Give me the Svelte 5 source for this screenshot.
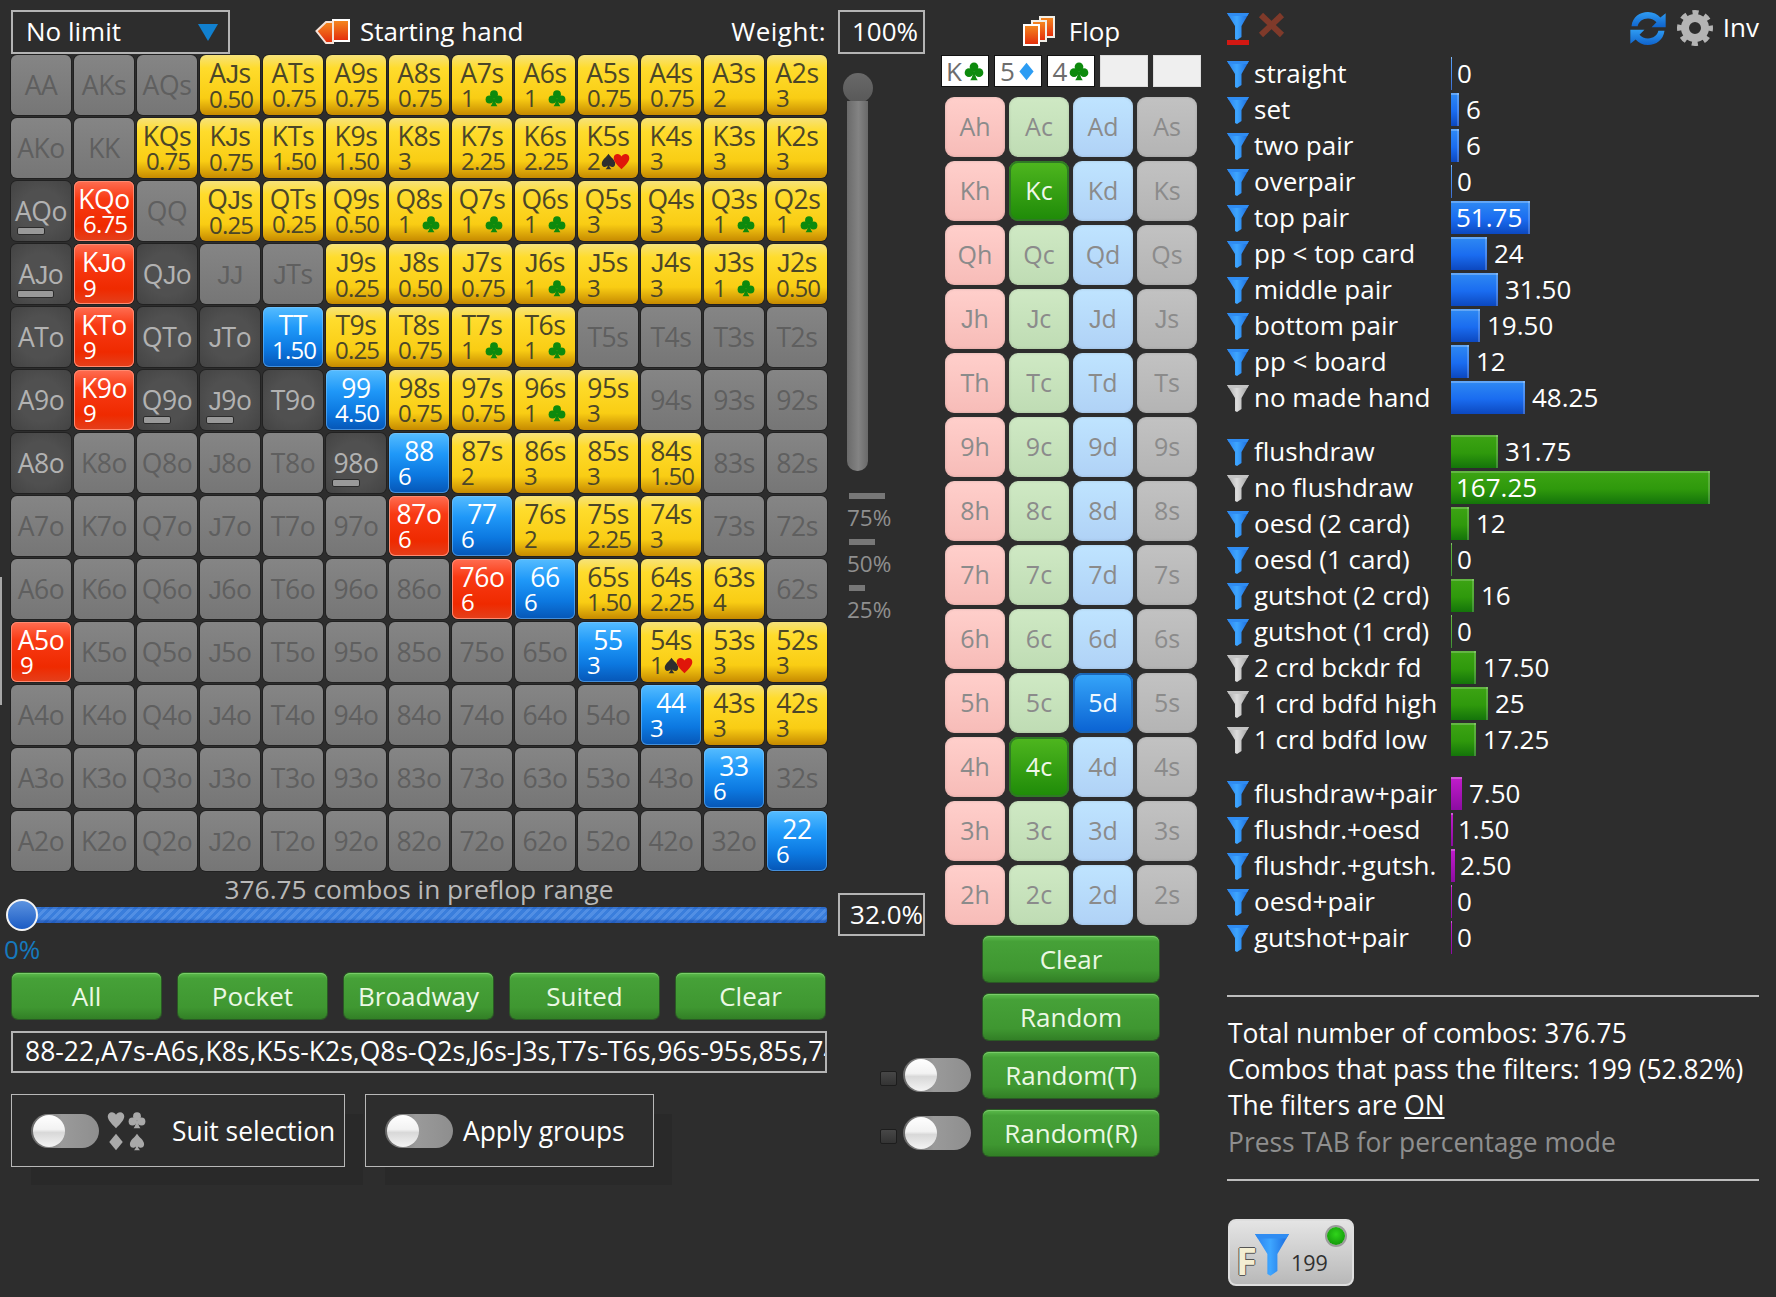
<script>
  const RANKS = 'AKQJT98765432'.split('');

  const VALUES = {
    AJs: '0.50', ATs: '0.75', A9s: '0.75', A8s: '0.75', A7s: '1', A6s: '1', A5s: '0.75', A4s: '0.75', A3s: '2', A2s: '3',
    KQs: '0.75', KJs: '0.75', KTs: '1.50', K9s: '1.50', K8s: '3', K7s: '2.25', K6s: '2.25', K5s: '2', K4s: '3', K3s: '3', K2s: '3',
    KQo: '6.75', QJs: '0.25', QTs: '0.25', Q9s: '0.50', Q8s: '1', Q7s: '1', Q6s: '1', Q5s: '3', Q4s: '3', Q3s: '1', Q2s: '1',
    KJo: '9', J9s: '0.25', J8s: '0.50', J7s: '0.75', J6s: '1', J5s: '3', J4s: '3', J3s: '1', J2s: '0.50',
    KTo: '9', TT: '1.50', T9s: '0.25', T8s: '0.75', T7s: '1', T6s: '1',
    K9o: '9', 99: '4.50', '98s': '0.75', '97s': '0.75', '96s': '1', '95s': '3',
    88: '6', '87s': '2', '86s': '3', '85s': '3', '84s': '1.50',
    '87o': '6', 77: '6', '76s': '2', '75s': '2.25', '74s': '3',
    '76o': '6', 66: '6', '65s': '1.50', '64s': '2.25', '63s': '4',
    A5o: '9', 55: '3', '54s': '1', '53s': '3', '52s': '3',
    44: '3', '43s': '3', '42s': '3',
    33: '6', 22: '6'
  };
  const CLUB = ['A7s', 'A6s', 'Q8s', 'Q7s', 'Q6s', 'Q3s', 'Q2s', 'J6s', 'J3s', 'T7s', 'T6s', '96s'];
  const SPADE_HEART = ['K5s', '54s'];
  const DARK = ['AQo', 'AJo', 'QJo', 'ATo', 'QTo', 'JTo', 'A9o', 'Q9o', 'J9o', 'T9o', 'A8o', '98o'];
  const WEIGHT = { AQo: 28, AJo: 37, Q9o: 28, J9o: 28, '98o': 28 };

  function handKind(name) {
    if (VALUES[name]) {
      if (name.length === 2) return 'blue';
      return name.endsWith('s') ? 'yellow' : 'red';
    }
    return DARK.includes(name) ? 'dark' : 'gray';
  }

  const hands = RANKS.flatMap((row, i) =>
    RANKS.map((col, j) => {
      const name = i === j ? row + col : i < j ? row + col + 's' : col + row + 'o';
      return { name, value: VALUES[name], kind: handKind(name) };
    })
  );

  const board = [
    { rank: 'K', suit: 'club' },
    { rank: '5', suit: 'diamond' },
    { rank: '4', suit: 'club' },
    {},
    {}
  ];

  const PICKED = { Kc: 'on-green', '4c': 'on-green', '5d': 'on-blue' };
  const deck = RANKS.flatMap((r) => ['h', 'c', 'd', 's'].map((s) => ({ name: r + s, suit: s })));

  const groups = [
    {
      color: 'bar-blue',
      rows: [
        { label: 'straight', value: '0', w: 1 },
        { label: 'set', value: '6', w: 8 },
        { label: 'two pair', value: '6', w: 8 },
        { label: 'overpair', value: '0', w: 1 },
        { label: 'top pair', value: '51.75', w: 79, inside: true },
        { label: 'pp < top card', value: '24', w: 36 },
        { label: 'middle pair', value: '31.50', w: 47 },
        { label: 'bottom pair', value: '19.50', w: 29 },
        { label: 'pp < board', value: '12', w: 18 },
        { label: 'no made hand', value: '48.25', w: 74, off: true }
      ]
    },
    {
      color: 'bar-green',
      rows: [
        { label: 'flushdraw', value: '31.75', w: 47 },
        { label: 'no flushdraw', value: '167.25', w: 259, inside: true, off: true },
        { label: 'oesd (2 card)', value: '12', w: 18 },
        { label: 'oesd (1 card)', value: '0', w: 1 },
        { label: 'gutshot (2 crd)', value: '16', w: 23 },
        { label: 'gutshot (1 crd)', value: '0', w: 1 },
        { label: '2 crd bckdr fd', value: '17.50', w: 25, off: true },
        { label: '1 crd bdfd high', value: '25', w: 37, off: true },
        { label: '1 crd bdfd low', value: '17.25', w: 25, off: true }
      ]
    },
    {
      color: 'bar-purple',
      rows: [
        { label: 'flushdraw+pair', value: '7.50', w: 11 },
        { label: 'flushdr.+oesd', value: '1.50', w: 2 },
        { label: 'flushdr.+gutsh.', value: '2.50', w: 4 },
        { label: 'oesd+pair', value: '0', w: 1 },
        { label: 'gutshot+pair', value: '0', w: 1 }
      ]
    }
  ];
</script>

{#snippet suitIcon(kind, cls)}
  <svg class={cls} viewBox="0 0 24 24" aria-hidden="true">
    {#if kind === 'club'}
      <circle cx="12" cy="7" r="5.2" />
      <circle cx="6" cy="14" r="5.2" />
      <circle cx="18" cy="14" r="5.2" />
      <path d="M11 9h2c0 6 .5 10 3.5 14h-9C10.500 19 11 15 11 9z" />
    {:else if kind === 'spade'}
      <path d="M12 1c3 5 9.500 8.500 9.500 14 0 3-2.200 4.800-4.500 4.800-1.500 0-2.900-.7-3.800-2 .2 2 1.100 3.700 2.800 5.200H8c1.700-1.500 2.600-3.200 2.800-5.200-.9 1.300-2.300 2-3.800 2-2.300 0-4.500-1.800-4.500-4.800C2.500 9.500 9 6 12 1z" />
    {:else if kind === 'heart'}
      <path d="M12 23C5 16 1 11.500 1 7c0-3.200 2.500-5.500 5.500-5.500 2.300 0 4.400 1.300 5.500 3.500 1.100-2.200 3.200-3.500 5.500-3.500C20.500 1.500 23 3.800 23 7c0 4.500-4 9-11 16z" />
    {:else}
      <path d="M12 1l9 11-9 11-9-11z" />
    {/if}
  </svg>
{/snippet}

{#snippet funnel(off, cls)}
  <svg class={cls} viewBox="0 0 22 28" aria-hidden="true">
    <path d="M0 1h22L14.500 14v11L10 28l-2-1V14z" fill={off ? 'url(#fn-gray)' : 'url(#fn-blue)'} />
    <path d="M0 1h22l-1.800 3H1.800z" fill={off ? '#c4c4c4' : '#2f8cf2'} />
  </svg>
{/snippet}

{#snippet toggle()}
  <span class="toggle"><span class="knob"></span></span>
{/snippet}

<!-- Open Sans drops its J below the baseline, so J gets a flat-footed face -->
{#snippet cardName(name)}
  {#each name.split(/(J)/) as part}{#if part === 'J'}<span class="flat-j">J</span>{:else}{part}{/if}{/each}
{/snippet}

<svg class="defs" width="0" height="0" aria-hidden="true">
  <defs>
    <linearGradient id="fn-blue" x1="0" x2="1" y1="0" y2="0">
      <stop offset="0" stop-color="#2a80ee" />
      <stop offset=".45" stop-color="#3ea6ff" />
      <stop offset="1" stop-color="#1a68dc" />
    </linearGradient>
    <linearGradient id="fn-gray" x1="0" x2="1" y1="0" y2="0">
      <stop offset="0" stop-color="#a8a8a8" />
      <stop offset=".45" stop-color="#dcdcdc" />
      <stop offset="1" stop-color="#a0a0a0" />
    </linearGradient>
    <linearGradient id="card-red" x1="0" x2="0" y1="0" y2="1">
      <stop offset="0" stop-color="#f58a20" />
      <stop offset="1" stop-color="#e32b0c" />
    </linearGradient>
    <linearGradient id="refresh" x1="0" x2="0" y1="0" y2="1">
      <stop offset="0" stop-color="#2f9cf2" />
      <stop offset="1" stop-color="#0f63cc" />
    </linearGradient>
  </defs>
</svg>

<div class="app">
  <span class="edge-mark"></span>

  <section class="range-col">
    <header class="range-head">
      <div class="select">
        <span class="head-text">No limit</span>
        <svg class="caret" viewBox="0 0 20 17" aria-hidden="true"><path d="M0 0h20L10 17z" /></svg>
      </div>
      <div class="head-title">
        <svg class="hand-icon" viewBox="0 0 36 28" aria-hidden="true">
          <path d="M18 2h16v21H18z" fill="url(#card-red)" stroke="#fff" stroke-width="2" />
          <path d="M1.500 13L11 4h7v21h-7z" fill="url(#card-red)" stroke="#f4e2d8" stroke-width="2" />
        </svg>
        <span class="head-text">Starting hand</span>
      </div>
      <span class="weight-label head-text">Weight:</span>
      <div class="num-box">100%</div>
    </header>

    <div class="matrix-row">
      <div class="matrix">
        {#each hands as hand (hand.name)}
          <div class="cell {hand.kind}">
            <span class="name">{@render cardName(hand.name)}</span>
            {#if hand.value}
              <span class="val">
                <span>{hand.value}</span>
                {#if CLUB.includes(hand.name)}
                  {@render suitIcon('club', 'cell-club')}
                {:else if SPADE_HEART.includes(hand.name)}
                  <span class="pair-suits">
                    {@render suitIcon('spade', 'cell-spade')}
                    {@render suitIcon('heart', 'cell-heart')}
                  </span>
                {/if}
              </span>
            {/if}
            {#if WEIGHT[hand.name]}
              <span class="weight-bar" style="width:{WEIGHT[hand.name]}px"></span>
            {/if}
          </div>
        {/each}
      </div>

      <div class="vslider">
        <span class="vknob"></span>
        <span class="vtrack"></span>
        <div class="ticks">
          <span class="tick" style="width:36px"></span>
          <span class="tick-label">75%</span>
          <span class="tick" style="width:26px"></span>
          <span class="tick-label">50%</span>
          <span class="tick" style="width:16px"></span>
          <span class="tick-label">25%</span>
        </div>
      </div>
    </div>

    <div class="combo-label">376.75 combos in preflop range</div>
    <div class="slider-row">
      <div class="hslider"><span class="hknob"></span></div>
      <div class="num-box pct">32.0%</div>
    </div>
    <div class="zero">0%</div>

    <div class="quick-btns">
      <button>All</button>
      <button>Pocket</button>
      <button>Broadway</button>
      <button>Suited</button>
      <button>Clear</button>
    </div>

    <div class="range-text"><span>88-22,A7s-A6s,K8s,K5s-K2s,Q8s-Q2s,J6s-J3s,T7s-T6s,96s-95s,85s,74s-72s,63s-62s,54s,53s</span></div>

    <div class="option-row">
      <div class="option suit-opt">
        {@render toggle()}
        <div class="suit-grid">
          {@render suitIcon('heart', 'opt-suit')}
          {@render suitIcon('club', 'opt-suit')}
          {@render suitIcon('diamond', 'opt-suit')}
          {@render suitIcon('spade', 'opt-suit')}
        </div>
        <span class="opt-label suit-label">Suit selection</span>
      </div>
      <div class="option group-opt">
        {@render toggle()}
        <span class="opt-label">Apply groups</span>
      </div>
    </div>
  </section>

  <section class="flop-col">
    <div class="flop-title">
      <svg class="flop-icon" viewBox="0 0 34 32" aria-hidden="true">
        <rect x="18" y="2" width="14" height="20" fill="url(#card-red)" stroke="#f2efe8" stroke-width="2" />
        <rect x="10" y="6" width="14" height="20" fill="url(#card-red)" stroke="#f2efe8" stroke-width="2" />
        <rect x="2" y="10" width="15" height="20" fill="url(#card-red)" stroke="#fff" stroke-width="2" />
      </svg>
      <span>Flop</span>
    </div>

    <div class="board">
      {#each board as card}
        <div class="board-card" class:empty={!card.rank}>
          {#if card.rank}
            <span>{card.rank}</span>
            {@render suitIcon(card.suit, 'board-' + card.suit)}
          {/if}
        </div>
      {/each}
    </div>

    <div class="deck">
      {#each deck as card (card.name)}
        <div class="deck-card {PICKED[card.name] ?? 'suit-' + card.suit}">{@render cardName(card.name)}</div>
      {/each}
    </div>

    <div class="deal-btns">
      <button>Clear</button>
      <button>Random</button>
      <div class="deal-row">
        <span class="led"></span>
        {@render toggle()}
        <button>Random(T)</button>
      </div>
      <div class="deal-row">
        <span class="led"></span>
        {@render toggle()}
        <button>Random(R)</button>
      </div>
    </div>
  </section>

  <section class="filter-col">
    <div class="filter-top">
      <div class="filter-main">
        {@render funnel(false, 'main-funnel')}
        <span class="main-underline"></span>
      </div>
      <svg class="cross" viewBox="0 0 27 26" aria-hidden="true">
        <path d="M3 3l21 20M24 3L3 23" stroke="#7f3a2a" stroke-width="6" fill="none" />
      </svg>
      <svg class="refresh" viewBox="3 2 30 28" aria-hidden="true">
        <path d="M4 14C5 6 11 2 18 2c4.500 0 8 1.800 10.500 4.700L33 3v12H21l4.200-4.200C23.500 8.800 21 7.500 18 7.500c-4.500 0-7.800 2.600-8.800 6.500z" fill="url(#refresh)" />
        <path d="M32 18c-1 8-7 12-14 12-4.500 0-8-1.800-10.500-4.700L3 29V17h12l-4.200 4.200c1.700 2 4.200 3.300 7.200 3.300 4.500 0 7.800-2.600 8.800-6.500z" fill="url(#refresh)" />
      </svg>
      <svg class="gear" viewBox="0 0 36 36" aria-hidden="true">
        <circle cx="18" cy="18" r="10" fill="none" stroke="#b4b4b4" stroke-width="8" />
        <circle cx="18" cy="18" r="15" fill="none" stroke="#b4b4b4" stroke-width="6" stroke-dasharray="5.890 5.890" stroke-dashoffset="2.900" />
      </svg>
      <span class="inv">Inv</span>
    </div>

    {#each groups as group}
      <div class="filter-group">
        {#each group.rows as row}
          <div class="filter-row">
            {@render funnel(row.off, 'row-funnel')}
            <span class="row-label">{row.label}</span>
            <div class="row-bar">
              <div class="bar {group.color}" style="width:{row.w}px">
                {#if row.inside}<span class="bar-text">{row.value}</span>{/if}
              </div>
              {#if !row.inside}
                <span class="row-value" class:tight={row.w < 5}>{row.value}</span>
              {/if}
            </div>
          </div>
        {/each}
      </div>
    {/each}

    <div class="summary">
      <div>Total number of combos: 376.75</div>
      <div>Combos that pass the filters: 199 (52.82%)</div>
      <div>The filters are <u>ON</u></div>
      <div class="hint">Press TAB for percentage mode</div>
    </div>

    <div class="badge">
      <span class="badge-f">F</span>
      {@render funnel(false, 'badge-funnel')}
      <span class="badge-count">199</span>
      <span class="badge-dot"></span>
    </div>
  </section>
</div>

<style>
  :global(body) {
    margin: 0;
    background: #2d2d2d;
  }

  * {
    box-sizing: border-box;
  }

  .defs {
    position: absolute;
  }

  .app {
    position: relative;
    isolation: isolate;
    display: flex;
    width: 1776px;
    height: 1297px;
    padding-left: 11px;
    overflow: hidden;
    background: #2d2d2d;
    color: #fff;
    font-family: 'Open Sans', 'Noto Sans', sans-serif;
    font-size: 26px;
    line-height: 36px;
  }

  .edge-mark {
    position: absolute;
    left: 0;
    top: 577px;
    width: 2px;
    height: 128px;
    background: #a8a8a8;
  }

  .flat-j {
    font-family: 'Liberation Sans', sans-serif;
  }

  /* left column */
  .range-col {
    flex: none;
    width: 914px;
    padding-top: 9px;
  }

  .range-head {
    display: flex;
    align-items: center;
    height: 46px;
  }

  .head-text {
    margin-top: -2px;
  }

  .select {
    display: flex;
    align-items: center;
    justify-content: space-between;
    width: 219px;
    height: 44px;
    padding: 0 10px 0 13px;
    border: 2px solid #b4b4b4;
  }

  .caret {
    width: 20px;
    height: 17px;
    fill: #1180cf;
  }

  .head-title {
    display: flex;
    align-items: center;
    gap: 9px;
    margin-left: 85px;
  }

  .hand-icon {
    width: 36px;
    height: 28px;
  }

  .weight-label {
    margin-left: auto;
    margin-right: 12px;
    letter-spacing: 0.5px;
  }

  .num-box {
    width: 87px;
    height: 44px;
    padding-right: 5px;
    border: 2px solid #b4b4b4;
    text-align: right;
    line-height: 39px;
  }

  .matrix-row {
    display: flex;
  }

  .matrix {
    display: grid;
    flex: none;
    grid-template-columns: repeat(13, 60px);
    grid-auto-rows: 60px;
    gap: 3px;
    width: 816px;
  }

  .cell {
    position: relative;
    display: flex;
    flex-direction: column;
    justify-content: center;
    align-items: center;
    border-radius: 6px;
    box-shadow: 0 0 0 1px rgba(0, 0, 0, 0.25);
    font-size: 26.500px;
    letter-spacing: -0.4px;
  }

  .cell.gray {
    background: linear-gradient(#858585, #767676);
    color: #5f5f5f;
  }

  .cell.dark {
    background: radial-gradient(ellipse at center, #505050 50%, #434343 100%);
    color: #b2b2b2;
  }

  .cell.yellow,
  .cell.red,
  .cell.blue {
    justify-content: flex-start;
    align-items: stretch;
    padding-top: 5px;
  }

  .cell.yellow {
    background: linear-gradient(#f6e27a 0, #ffdc2c 22%, #f9cd14 72%, #c68a00 100%);
    color: #4b4628;
  }

  .cell.red {
    background: linear-gradient(#ff6e52 0, #f83a14 30%, #ef2a00 75%, #e4401c 100%);
    box-shadow: 0 0 0 1px rgba(0, 0, 0, 0.25), inset 0 0 0 1px #ff8a70;
    color: #fff;
  }

  .cell.blue {
    background: linear-gradient(#55bcff 0, #1f98f8 35%, #0c78e0 70%, #0656b6 100%);
    box-shadow: 0 0 0 1px rgba(0, 0, 0, 0.25), inset 0 0 0 1px rgba(130, 200, 255, 0.5);
    color: #fff;
  }

  .name {
    display: block;
    line-height: 26px;
    text-align: center;
  }

  .val {
    display: flex;
    align-items: center;
    justify-content: space-between;
    height: 24px;
    padding: 0 9px;
    font-size: 24px;
    line-height: 24px;
    letter-spacing: -0.8px;
  }

  .cell-club {
    width: 18px;
    height: 18px;
    fill: #0d8a0d;
  }

  .pair-suits {
    display: flex;
    margin-right: -1px;
  }

  .cell-spade {
    width: 17px;
    height: 17px;
    fill: #2e2e2e;
  }

  .cell-heart {
    width: 17px;
    height: 17px;
    margin-left: -4px;
    fill: #e0160a;
  }

  .weight-bar {
    position: absolute;
    left: 6px;
    top: 46px;
    height: 8px;
    border: 1px solid #2b2b2b;
    border-radius: 2px;
    background: #999;
  }

  .vslider {
    display: flex;
    flex-direction: column;
    width: 98px;
    padding-left: 20px;
  }

  .vknob {
    width: 30px;
    height: 30px;
    margin: 18px 0 -2px -4px;
    border-radius: 50%;
    background: linear-gradient(#696969, #585858);
  }

  .vtrack {
    width: 21px;
    height: 370px;
    border-radius: 0 0 10px 10px;
    background: linear-gradient(90deg, #6a6a6a, #838383 55%, #696969);
  }

  .ticks {
    display: flex;
    flex-direction: column;
    margin-top: 22px;
    padding-left: 2px;
    color: #8f8f8f;
    font-size: 22.500px;
  }

  .tick {
    height: 6px;
    background: #777;
  }

  .tick-label {
    height: 40px;
    margin-left: -2px;
    line-height: 37px;
  }

  .combo-label {
    width: 816px;
    height: 22px;
    color: #b9b9b9;
    font-size: 26.300px;
    line-height: 36px;
    text-align: center;
  }

  .slider-row {
    display: flex;
    align-items: center;
    justify-content: space-between;
    height: 43px;
  }

  .hslider {
    position: relative;
    width: 807px;
    height: 16px;
    margin-left: 9px;
    border-radius: 3px;
    background: repeating-linear-gradient(-45deg, #3a7edc 0 3px, #528fe4 3px 6px);
    box-shadow: inset 0 -3px 2px rgba(15, 65, 165, 0.55), inset 0 2px 1px rgba(20, 80, 180, 0.4);
  }

  .hknob {
    position: absolute;
    left: -14px;
    top: -8px;
    width: 32px;
    height: 32px;
    border: 2px solid #f4f4f4;
    border-radius: 50%;
    background: linear-gradient(#5c93e0, #1c5cc4);
  }

  .pct {
    height: 43px;
    padding-right: 0;
    line-height: 38px;
  }

  .zero {
    height: 37px;
    margin-left: -7px;
    color: #1679bd;
    font-size: 26px;
    line-height: 26px;
  }

  button {
    display: block;
    height: 46px;
    padding: 0;
    border: 0;
    border-radius: 6px;
    background: linear-gradient(#5cbc4c 0, #46a138 12%, #3f9731 75%, #327f26 100%);
    box-shadow: inset 0 1px 0 #79cc69, 0 0 0 1px #2a5a24;
    color: #ebf8e4;
    font: inherit;
    line-height: 46px;
  }

  .quick-btns {
    display: grid;
    grid-template-columns: repeat(5, 149px);
    gap: 17px;
    width: 816px;
    padding-left: 1px;
  }

  .range-text {
    width: 816px;
    height: 42px;
    margin-top: 12px;
    padding: 0 0 0 12px;
    border: 2px solid #b4b4b4;
    overflow: hidden;
    font-size: 26.500px;
    line-height: 37px;
    white-space: nowrap;
  }

  .option-row {
    display: flex;
    gap: 20px;
    margin-top: 21px;
    font-size: 26.400px;
  }

  .option {
    position: relative;
    display: flex;
    align-items: center;
    height: 73px;
    border: 1px solid #b8b8b8;
    background: #2d2d2d;
  }

  .option::after {
    content: '';
    position: absolute;
    left: 19px;
    top: 19px;
    z-index: -1;
    width: 100%;
    height: 100%;
    background: #292929;
  }

  .suit-opt {
    width: 334px;
    padding-left: 19px;
  }

  .group-opt {
    width: 289px;
    padding-left: 19px;
  }

  .toggle {
    display: flex;
    align-items: center;
    flex: none;
    width: 68px;
    height: 34px;
    border-radius: 17px;
    background: linear-gradient(90deg, #666, #9a9a9a 45%, #8e8e8e);
  }

  .knob {
    width: 32px;
    height: 32px;
    margin-left: 2px;
    border-radius: 50%;
    background: linear-gradient(#fff 0, #f2f2f2 45%, #d8d8d8 55%, #f4f4f4 100%);
  }

  .suit-grid {
    display: grid;
    grid-template-columns: 18px 18px;
    gap: 4px 3px;
    margin-left: 8px;
  }

  .opt-suit {
    width: 18px;
    height: 18px;
    fill: #a9a9a9;
  }

  .opt-label {
    margin-left: 10px;
    white-space: nowrap;
  }

  .suit-label {
    margin-left: 26px;
  }

  /* flop column */
  .flop-col {
    flex: none;
    width: 260px;
    margin-left: 16px;
  }

  .flop-title {
    display: flex;
    align-items: center;
    justify-content: center;
    gap: 13px;
    height: 55px;
    padding: 7px 0 0 0;
  }

  .flop-icon {
    width: 34px;
    height: 32px;
  }

  .board {
    display: flex;
    gap: 5px;
  }

  .board-card {
    display: flex;
    align-items: center;
    justify-content: center;
    gap: 2px;
    width: 48px;
    height: 32px;
    border: 1px solid #111;
    background: #fff;
    color: #6d6d6d;
    line-height: 30px;
  }

  .board-card.empty {
    border-color: #ddd;
    background: #efefef;
  }

  .board-club {
    width: 20px;
    height: 20px;
    fill: #0d8a0d;
  }

  .board-diamond {
    width: 19px;
    height: 19px;
    fill: #2c9cf3;
  }

  .deck {
    display: grid;
    grid-template-columns: repeat(4, 60px);
    grid-auto-rows: 60px;
    gap: 4px;
    margin: 10px 0 0 4px;
  }

  .deck-card {
    border-radius: 9px;
    box-shadow: inset 0 0 3px rgba(0, 0, 0, 0.15);
    color: #8b8b8b;
    font-size: 25px;
    line-height: 58px;
    text-align: center;
  }

  .suit-h {
    background: linear-gradient(#ffcfcb, #f7bcb8);
  }

  .suit-c {
    background: linear-gradient(#cfe9c4, #bfdcb4);
  }

  .suit-d {
    background: linear-gradient(#bfe4ff, #b0d2f6);
  }

  .suit-s {
    background: linear-gradient(#c2c2c2, #b4b4b4);
  }

  .on-green {
    background: linear-gradient(#4fb71f, #1e8a08);
    box-shadow: inset 0 0 0 2px #2f7a25;
    color: #f0f8ea;
  }

  .on-blue {
    background: linear-gradient(#36a6fa, #0a62d2);
    box-shadow: inset 0 0 0 2px #1a66b8;
    color: #f0f8ff;
  }

  .deal-btns {
    display: flex;
    flex-direction: column;
    align-items: flex-end;
    gap: 12px;
    margin: 11px 42px 0 0;
  }

  .deal-btns button {
    width: 176px;
  }

  .deal-row {
    display: flex;
    align-items: center;
    height: 46px;
    margin-left: -103px;
  }

  .led {
    width: 17px;
    height: 15px;
    margin: 7px 6px 0 0;
    border: 1px solid #1d1d1d;
    border-radius: 2px;
    background: linear-gradient(#474747, #343434);
  }

  .deal-row button {
    margin-left: 12px;
  }

  /* filter column */
  .filter-col {
    flex: none;
    width: 532px;
    margin-left: 26px;
  }

  .filter-top {
    display: flex;
    align-items: flex-start;
    height: 55px;
    padding-top: 12px;
  }

  .filter-main {
    position: relative;
    width: 23px;
    height: 33px;
  }

  .main-funnel {
    display: block;
    width: 22px;
    height: 28px;
  }

  .main-underline {
    position: absolute;
    left: 0;
    bottom: 0;
    width: 22px;
    height: 5px;
    background: #d31812;
  }

  .cross {
    width: 27px;
    height: 26px;
    margin-left: 8px;
  }

  .refresh {
    width: 36px;
    height: 33px;
    margin-left: auto;
  }

  .gear {
    width: 36px;
    height: 36px;
    margin: -2px 0 0 11px;
  }

  .inv {
    margin-left: 10px;
    line-height: 30px;
  }

  .filter-group {
    margin-bottom: 18px;
  }

  .filter-row {
    display: flex;
    align-items: center;
    height: 36px;
  }

  .row-funnel {
    flex: none;
    width: 22px;
    height: 28px;
    margin-top: 2px;
  }

  .row-label {
    flex: none;
    width: 202px;
    padding-left: 5px;
    white-space: nowrap;
  }

  .row-bar {
    display: flex;
    align-items: center;
  }

  .bar {
    height: 33px;
    overflow: visible;
    white-space: nowrap;
  }

  .bar-blue {
    background: linear-gradient(#2f8af3, #1a6cf0 55%, #0c48bf);
    box-shadow: inset 0 2px 0 rgba(255, 255, 255, 0.25), inset -2px 0 0 rgba(255, 255, 255, 0.2);
  }

  .bar-green {
    background: linear-gradient(#3da414, #2f990c 55%, #14740a);
    box-shadow: inset 0 2px 0 rgba(255, 255, 255, 0.2), inset -2px 0 0 rgba(255, 255, 255, 0.18);
  }

  .bar-purple {
    background: linear-gradient(#c21ccc, #8c0ca2);
    box-shadow: inset 0 2px 0 rgba(255, 255, 255, 0.25);
  }

  .bar-text {
    display: block;
    padding-left: 5px;
    line-height: 33px;
  }

  .row-value {
    margin-left: 7px;
  }

  .row-value.tight {
    margin-left: 5px;
  }

  .summary {
    margin-top: 40px;
    padding: 18px 0 19px 1px;
    border-top: 2px solid #bdbdbd;
    border-bottom: 2px solid #bdbdbd;
    font-size: 26.400px;
    line-height: 36.200px;
  }

  .hint {
    color: #8f8f8f;
  }

  .badge {
    position: relative;
    width: 126px;
    height: 67px;
    margin: 38px 0 0 1px;
    border: 2px solid #dedede;
    border-radius: 8px;
    background: linear-gradient(#e4e4e4, #c6c6c6 70%, #b8b8b8);
  }

  .badge-f {
    position: absolute;
    left: 6px;
    top: 20px;
    color: #f4eed2;
    font-size: 38px;
    font-weight: 700;
    line-height: 38px;
    text-shadow: 1px 0 #555, -1px 0 #555, 0 1px #555, 0 -1px #555;
  }

  .badge-funnel {
    position: absolute;
    left: 25px;
    top: 11px;
    width: 34px;
    height: 44px;
  }

  .badge-count {
    position: absolute;
    left: 61px;
    top: 28px;
    color: #303030;
    font-size: 21.500px;
    line-height: 28px;
  }

  .badge-dot {
    position: absolute;
    left: 97px;
    top: 6px;
    width: 18px;
    height: 18px;
    border-radius: 50%;
    background: radial-gradient(circle at 50% 40%, #2fd41a, #0d8a08);
    box-shadow: 0 0 0 2px #9c9c9c;
  }
</style>
